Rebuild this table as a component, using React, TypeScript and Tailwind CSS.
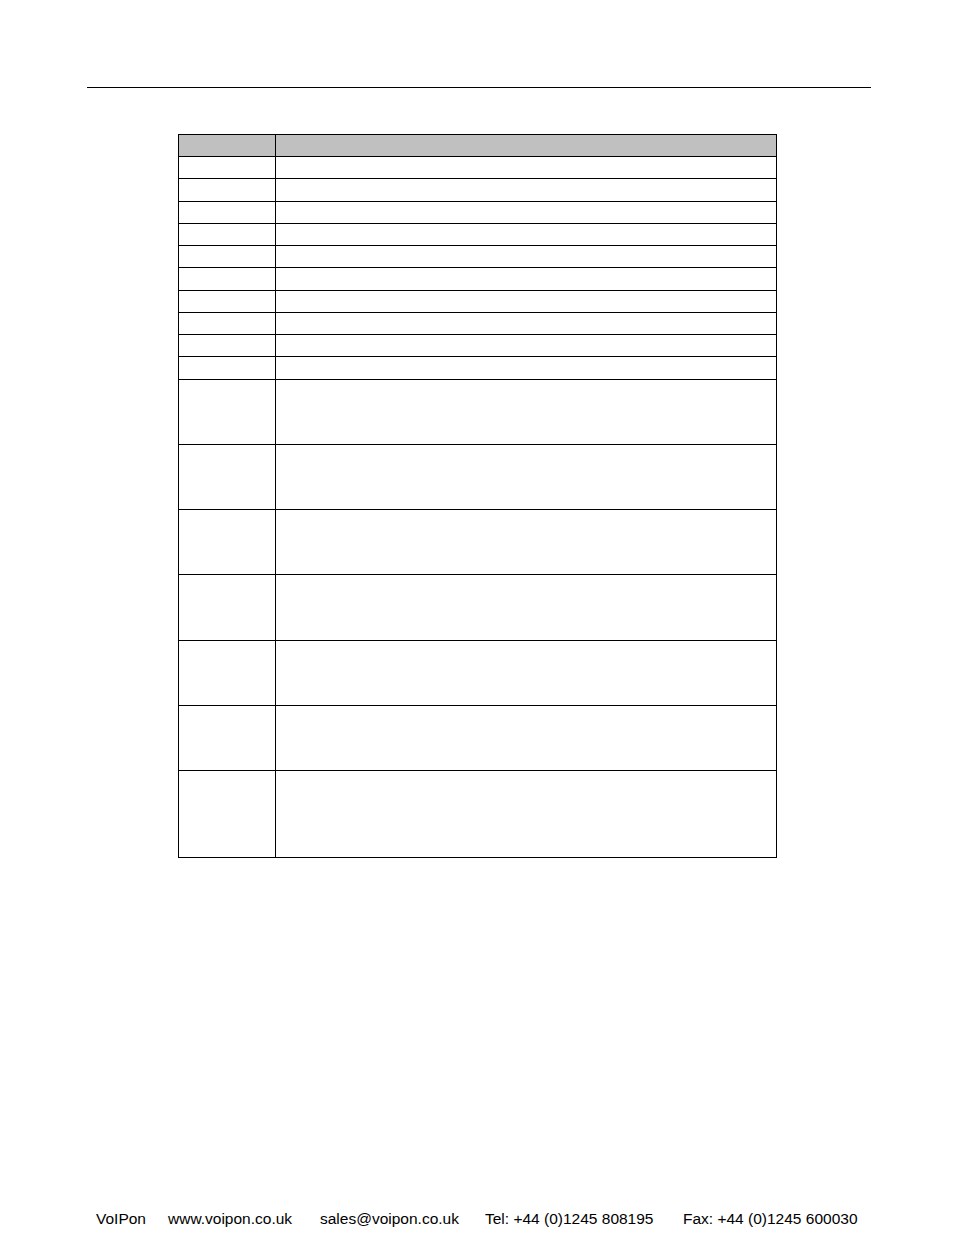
const rowHeights = [22, 23, 22, 22, 22, 23, 22, 22, 22, 23, 65, 65, 65, 66, 65, 65, 87];

const footerItems = [
  { text: "VoIPon", width: "w-[72px]" },
  { text: "www.voipon.co.uk", width: "w-[152px]" },
  { text: "sales@voipon.co.uk", width: "w-[165px]" },
  { text: "Tel: +44 (0)1245 808195", width: "w-[198px]" },
  { text: "Fax: +44 (0)1245 600030", width: "w-[190px]" },
];

export default function App() {
  return (
    <div className="relative w-[954px] h-[1235px] bg-white text-black font-['Liberation_Sans',Arial,sans-serif]">
      {/* Header rule */}
      <div className="pt-[87px] pl-[87px]">
        <div className="w-[784px] h-px bg-black" />
      </div>

      {/* Table */}
      <div className="mt-[46px] ml-[178px] w-[599px] border-l border-t border-black">
        <div className="flex h-[22px] bg-[#c0c0c0]">
          <div className="w-[97px] border-r border-b border-black" />
          <div className="flex-1 border-r border-b border-black" />
        </div>
        {rowHeights.map((h, i) => (
          <div key={i} className="flex" style={{ height: h }}>
            <div className="w-[97px] border-r border-b border-black" />
            <div className="flex-1 border-r border-b border-black" />
          </div>
        ))}
      </div>

      {/* Footer */}
      <div className="absolute left-[96px] top-[1210px] flex text-[15.5px] leading-[17px] whitespace-nowrap">
        {footerItems.map((item) => (
          <span key={item.text} className={item.width}>
            {item.text}
          </span>
        ))}
      </div>
    </div>
  );
}
